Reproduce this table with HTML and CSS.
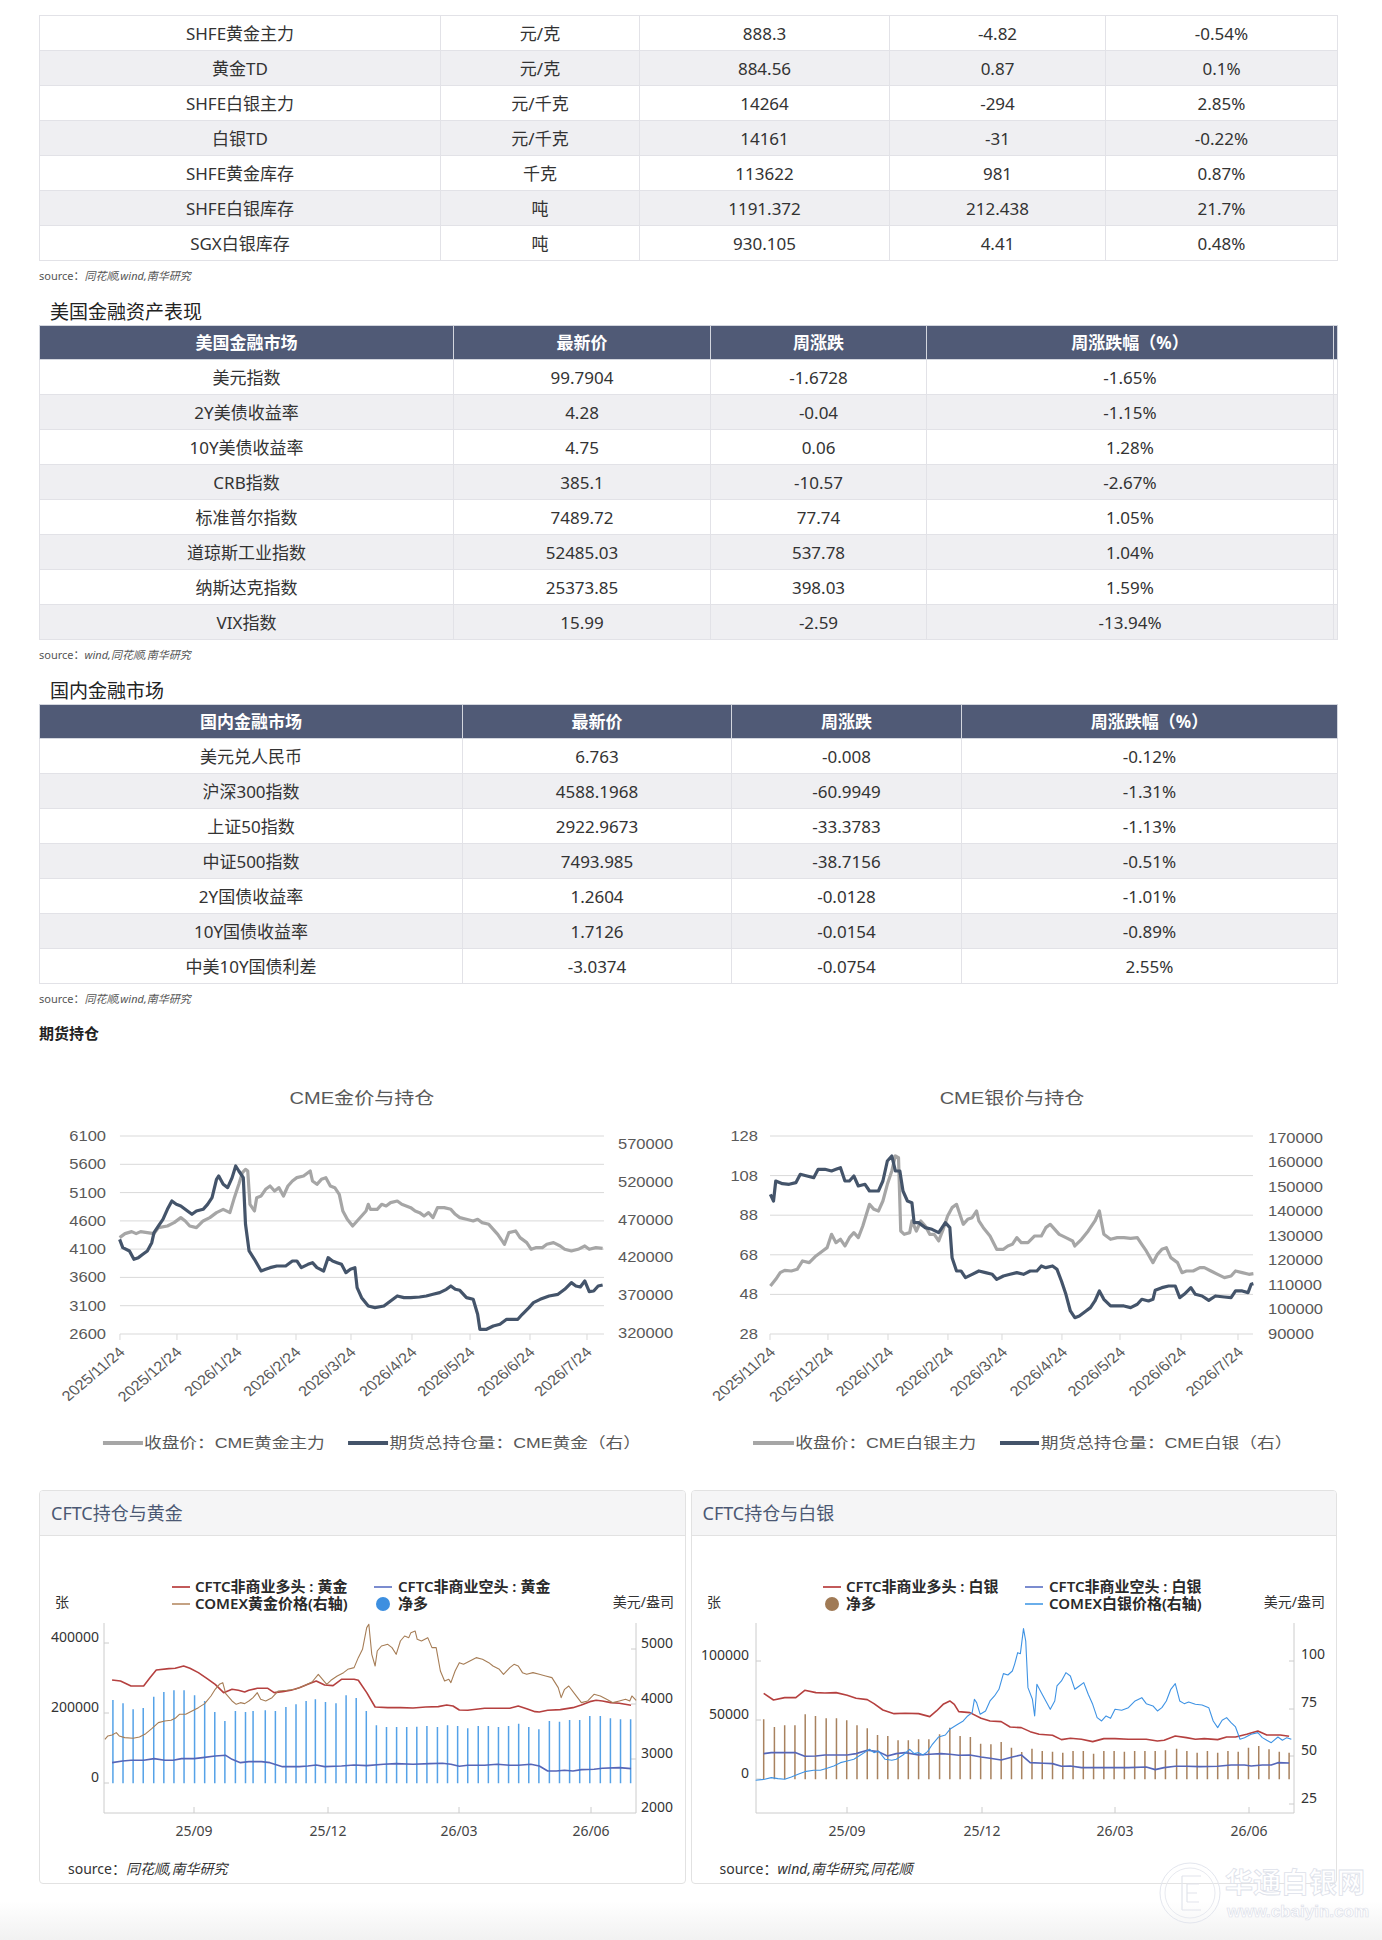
FILE: index.html
```html
<!DOCTYPE html>
<html lang="zh-CN">
<head>
<meta charset="utf-8">
<title>贵金属周报数据</title>
<link rel="stylesheet" href="styles.css">
</head>
<body>
<div class="page">

  <table class="tbl t1">
    <colgroup><col class="a"><col class="b"><col class="c"><col class="d"><col class="e"></colgroup>
    <tbody>
      <tr><td>SHFE黄金主力</td><td>元/克</td><td>888.3</td><td>-4.82</td><td>-0.54%</td></tr>
      <tr><td>黄金TD</td><td>元/克</td><td>884.56</td><td>0.87</td><td>0.1%</td></tr>
      <tr><td>SHFE白银主力</td><td>元/千克</td><td>14264</td><td>-294</td><td>2.85%</td></tr>
      <tr><td>白银TD</td><td>元/千克</td><td>14161</td><td>-31</td><td>-0.22%</td></tr>
      <tr><td>SHFE黄金库存</td><td>千克</td><td>113622</td><td>981</td><td>0.87%</td></tr>
      <tr><td>SHFE白银库存</td><td>吨</td><td>1191.372</td><td>212.438</td><td>21.7%</td></tr>
      <tr><td>SGX白银库存</td><td>吨</td><td>930.105</td><td>4.41</td><td>0.48%</td></tr>
    </tbody>
  </table>
  <p class="src">source：<i>同花顺,wind,南华研究</i></p>

  <h2 class="sec-title">美国金融资产表现</h2>
  <table class="tbl t2">
    <colgroup><col class="a"><col class="b"><col class="c"><col class="d"><col class="e"></colgroup>
    <thead>
      <tr><th>美国金融市场</th><th>最新价</th><th>周涨跌</th><th>周涨跌幅（%）</th><th class="edge"></th></tr>
    </thead>
    <tbody>
      <tr><td>美元指数</td><td>99.7904</td><td>-1.6728</td><td>-1.65%</td><td class="edge"></td></tr>
      <tr><td>2Y美债收益率</td><td>4.28</td><td>-0.04</td><td>-1.15%</td><td class="edge"></td></tr>
      <tr><td>10Y美债收益率</td><td>4.75</td><td>0.06</td><td>1.28%</td><td class="edge"></td></tr>
      <tr><td>CRB指数</td><td>385.1</td><td>-10.57</td><td>-2.67%</td><td class="edge"></td></tr>
      <tr><td>标准普尔指数</td><td>7489.72</td><td>77.74</td><td>1.05%</td><td class="edge"></td></tr>
      <tr><td>道琼斯工业指数</td><td>52485.03</td><td>537.78</td><td>1.04%</td><td class="edge"></td></tr>
      <tr><td>纳斯达克指数</td><td>25373.85</td><td>398.03</td><td>1.59%</td><td class="edge"></td></tr>
      <tr><td>VIX指数</td><td>15.99</td><td>-2.59</td><td>-13.94%</td><td class="edge"></td></tr>
    </tbody>
  </table>
  <p class="src">source：<i>wind,同花顺,南华研究</i></p>

  <h2 class="sec-title">国内金融市场</h2>
  <table class="tbl t3">
    <colgroup><col class="a"><col class="b"><col class="c"><col class="d"></colgroup>
    <thead>
      <tr><th>国内金融市场</th><th>最新价</th><th>周涨跌</th><th>周涨跌幅（%）</th></tr>
    </thead>
    <tbody>
      <tr><td>美元兑人民币</td><td>6.763</td><td>-0.008</td><td>-0.12%</td></tr>
      <tr><td>沪深300指数</td><td>4588.1968</td><td>-60.9949</td><td>-1.31%</td></tr>
      <tr><td>上证50指数</td><td>2922.9673</td><td>-33.3783</td><td>-1.13%</td></tr>
      <tr><td>中证500指数</td><td>7493.985</td><td>-38.7156</td><td>-0.51%</td></tr>
      <tr><td>2Y国债收益率</td><td>1.2604</td><td>-0.0128</td><td>-1.01%</td></tr>
      <tr><td>10Y国债收益率</td><td>1.7126</td><td>-0.0154</td><td>-0.89%</td></tr>
      <tr><td>中美10Y国债利差</td><td>-3.0374</td><td>-0.0754</td><td>2.55%</td></tr>
    </tbody>
  </table>
  <p class="src">source：<i>同花顺,wind,南华研究</i></p>

  <h3 class="sub-title">期货持仓</h3>

  <div class="cme-row">
    <!-- CME gold -->
    <svg class="cme" width="649" height="410" viewBox="0 0 550 410" preserveAspectRatio="none">
      <text class="cme-title" x="273.7" y="43" text-anchor="middle">CME金价与持仓</text>
      <g class="grid">
        <path d="M68.6 75H478.8M68.6 103.3H478.8M68.6 131.6H478.8M68.6 159.9H478.8M68.6 188.1H478.8M68.6 216.4H478.8M68.6 244.7H478.8M68.6 273H478.8"/>
        <path d="M68.6 273V279M116.9 273V279M167.8 273V279M217.8 273V279M264.4 273V279M316.1 273V279M365.3 273V279M416.1 273V279M464.4 273V279"/>
      </g>
      <g class="ax-l">
        <text x="56.8" y="80">6100</text><text x="56.8" y="108.3">5600</text><text x="56.8" y="136.6">5100</text><text x="56.8" y="164.9">4600</text>
        <text x="56.8" y="193.1">4100</text><text x="56.8" y="221.4">3600</text><text x="56.8" y="249.7">3100</text><text x="56.8" y="278">2600</text>
      </g>
      <g class="ax-r">
        <text x="490.7" y="88">570000</text><text x="490.7" y="125.8">520000</text><text x="490.7" y="163.6">470000</text>
        <text x="490.7" y="201.4">420000</text><text x="490.7" y="239.2">370000</text><text x="490.7" y="277">320000</text>
      </g>
      <g class="ax-x">
        <text transform="translate(73.7 292) rotate(-45)">2025/11/24</text>
        <text transform="translate(122 292) rotate(-45)">2025/12/24</text>
        <text transform="translate(172.9 292) rotate(-45)">2026/1/24</text>
        <text transform="translate(222.9 292) rotate(-45)">2026/2/24</text>
        <text transform="translate(269.5 292) rotate(-45)">2026/3/24</text>
        <text transform="translate(321.2 292) rotate(-45)">2026/4/24</text>
        <text transform="translate(370.4 292) rotate(-45)">2026/5/24</text>
        <text transform="translate(421.2 292) rotate(-45)">2026/6/24</text>
        <text transform="translate(469.5 292) rotate(-45)">2026/7/24</text>
      </g>
      <g transform="translate(-33.05,-20) scale(0.3783,0.3333)">
        <polyline class="ln-gray" points="268,590 280,578 295,572 305,578 315,572 330,575 345,578 355,560 375,555 390,545 405,530 415,540 425,555 440,560 455,540 470,530 485,515 500,505 515,515 525,470 535,430 543,395 550,385 555,390 560,490 570,510 575,470 585,465 595,445 605,435 615,450 625,440 635,465 645,435 655,420 665,410 680,405 695,390 700,420 710,430 720,415 730,410 740,435 750,440 760,460 768,510 778,535 790,555 800,540 810,525 820,510 825,490 830,505 845,505 855,490 865,495 875,485 890,480 900,490 910,495 920,500 930,510 940,515 950,525 960,515 970,530 980,500 995,500 1010,505 1020,520 1030,530 1045,535 1060,540 1070,535 1080,545 1095,550 1105,565 1115,580 1125,600 1130,610 1140,575 1155,570 1165,590 1180,605 1190,625 1200,620 1215,620 1225,610 1240,605 1255,615 1265,625 1280,630 1295,625 1310,615 1320,625 1335,620 1350,622"/>
        <polyline class="ln-navy" points="268,595 275,620 290,630 300,655 310,650 320,640 330,630 340,605 345,575 355,555 365,535 375,505 385,480 395,490 405,495 420,510 430,520 440,510 455,505 465,490 475,470 485,415 490,405 500,430 510,440 520,410 528,375 535,390 545,410 550,550 558,630 570,655 585,690 595,685 605,680 620,675 640,675 655,660 665,660 675,680 690,670 700,665 710,680 725,690 735,650 745,660 755,665 765,670 775,695 785,685 795,680 800,740 810,770 825,795 840,800 860,795 875,780 890,765 905,770 920,770 940,768 955,765 970,760 985,755 1000,745 1010,735 1020,745 1030,748 1045,770 1060,775 1070,820 1075,865 1090,865 1105,855 1120,850 1135,835 1160,835 1170,820 1185,800 1195,785 1210,775 1230,765 1250,760 1265,745 1280,725 1290,735 1300,738 1310,720 1320,752 1330,750 1340,735 1350,732"/>
      </g>
      <g class="lg">
        <path class="lg-gray" d="M54.2 382H88.1"/>
        <text x="89" y="387.5">收盘价：CME黄金主力</text>
        <path class="lg-navy" d="M261.9 382H295.8"/>
        <text x="297" y="387.5">期货总持仓量：CME黄金（右）</text>
      </g>
    </svg>

    <!-- CME silver -->
    <svg class="cme" width="649" height="410" viewBox="0 0 550 410" preserveAspectRatio="none">
      <text class="cme-title" x="274.6" y="43" text-anchor="middle">CME银价与持仓</text>
      <g class="grid">
        <path d="M69.5 75H478.8M69.5 114.6H478.8M69.5 154.2H478.8M69.5 193.8H478.8M69.5 233.4H478.8M69.5 273H478.8"/>
        <path d="M69.5 273V279M118.6 273V279M169.5 273V279M220.3 273V279M266.1 273V279M316.9 273V279M366.1 273V279M417.8 273V279M466.1 273V279"/>
      </g>
      <g class="ax-l">
        <text x="59.3" y="80">128</text><text x="59.3" y="119.6">108</text><text x="59.3" y="159.2">88</text>
        <text x="59.3" y="198.8">68</text><text x="59.3" y="238.4">48</text><text x="59.3" y="278">28</text>
      </g>
      <g class="ax-r">
        <text x="491.5" y="82">170000</text><text x="491.5" y="106.5">160000</text><text x="491.5" y="131">150000</text>
        <text x="491.5" y="155.5">140000</text><text x="491.5" y="180">130000</text><text x="491.5" y="204.5">120000</text>
        <text x="491.5" y="229">110000</text><text x="491.5" y="253.5">100000</text><text x="491.5" y="278">90000</text>
      </g>
      <g class="ax-x">
        <text transform="translate(75 292) rotate(-45)">2025/11/24</text>
        <text transform="translate(124.1 292) rotate(-45)">2025/12/24</text>
        <text transform="translate(175 292) rotate(-45)">2026/1/24</text>
        <text transform="translate(225.8 292) rotate(-45)">2026/2/24</text>
        <text transform="translate(271.6 292) rotate(-45)">2026/3/24</text>
        <text transform="translate(322.4 292) rotate(-45)">2026/4/24</text>
        <text transform="translate(371.6 292) rotate(-45)">2026/5/24</text>
        <text transform="translate(423.3 292) rotate(-45)">2026/6/24</text>
        <text transform="translate(471.6 292) rotate(-45)">2026/7/24</text>
      </g>
      <g transform="translate(-5.08,-20) scale(0.3783,0.3333)">
        <polyline class="ln-gray" points="198,735 210,715 220,695 230,688 245,690 258,685 270,660 285,665 300,645 315,630 325,620 335,580 345,605 355,595 365,615 375,590 385,575 395,590 405,555 420,490 430,505 440,510 450,480 460,430 470,390 478,345 485,350 490,570 498,580 510,575 515,540 525,570 535,540 545,555 555,580 565,580 575,600 585,565 595,525 605,500 615,490 620,510 630,550 640,535 650,530 660,510 665,540 675,560 690,585 705,625 720,625 730,615 740,610 750,590 760,605 775,605 790,585 805,585 815,560 825,550 835,565 845,580 860,590 875,600 880,615 895,595 910,570 925,540 935,510 945,580 960,595 975,590 990,590 1005,592 1020,590 1030,610 1040,630 1055,665 1065,640 1075,625 1085,620 1095,650 1110,665 1120,695 1130,690 1145,690 1160,680 1170,680 1185,690 1200,700 1215,710 1230,705 1240,690 1255,695 1270,700 1280,698"/>
        <polyline class="ln-navy" points="198,460 205,480 210,420 225,428 240,430 255,425 265,400 280,405 295,410 305,385 320,385 335,390 345,385 355,380 365,420 375,420 385,405 395,435 410,430 420,450 440,450 450,420 460,360 470,345 478,390 488,390 495,450 505,480 515,485 520,545 530,545 545,560 560,565 575,575 590,545 600,560 605,650 615,690 625,690 635,710 650,700 665,690 680,695 695,700 705,715 720,705 735,700 750,695 765,700 780,690 795,690 805,675 815,680 830,675 840,685 850,720 860,760 870,810 880,830 890,825 905,810 915,800 925,780 935,750 945,775 960,795 975,795 990,795 1005,800 1020,790 1030,775 1045,780 1055,775 1060,748 1075,740 1090,735 1105,735 1115,770 1125,760 1140,740 1150,760 1165,765 1180,778 1195,765 1215,768 1230,770 1240,750 1255,750 1268,755 1275,730 1280,728"/>
      </g>
      <g class="lg">
        <path class="lg-gray" d="M55.1 382H89.8"/>
        <text x="91" y="387.5">收盘价：CME白银主力</text>
        <path class="lg-navy" d="M264.4 382H297.5"/>
        <text x="299" y="387.5">期货总持仓量：CME白银（右）</text>
      </g>
    </svg>
  </div>

  <div class="cftc-row">
    <section class="panel">
      <header class="panel-head">CFTC持仓与黄金</header>
      <div class="panel-body">
        <svg class="cftc" width="645" height="312" viewBox="0 0 645 312">
          <text class="unit" x="15" y="71">张</text>
          <text class="unit" x="634" y="71" text-anchor="end">美元/盎司</text>
          <g class="leg">
            <path d="M132 51H150" stroke="#c25a5a" stroke-width="2"/>
            <text x="155" y="56">CFTC非商业多头 : 黄金</text>
            <path d="M334 51H352" stroke="#7b8ccf" stroke-width="2"/>
            <text x="358" y="56">CFTC非商业空头 : 黄金</text>
            <path d="M132 68H150" stroke="#c4a283" stroke-width="2"/>
            <text x="155" y="73">COMEX黄金价格(右轴)</text>
            <circle cx="343" cy="68" r="7" fill="#3d8fe0"/>
            <text x="358" y="73">净多</text>
          </g>
          <g class="axis">
            <path d="M64 87V277H596V87"/>
            <path d="M64 107H69M64 177H69M64 247H69M591 113H596M591 168H596M591 223H596M154 277V271M288 277V271M419 277V271M551 277V271"/>
          </g>
          <g class="lbl-l">
            <text x="59" y="106">400000</text><text x="59" y="176">200000</text><text x="59" y="246">0</text>
          </g>
          <g class="lbl-r">
            <text x="601" y="112">5000</text><text x="601" y="167">4000</text><text x="601" y="222">3000</text><text x="601" y="276">2000</text>
          </g>
          <g class="lbl-x">
            <text x="154" y="300">25/09</text><text x="288" y="300">25/12</text><text x="419" y="300">26/03</text><text x="551" y="300">26/06</text>
          </g>
          <g transform="translate(-10,-55) scale(0.4209,0.3333)">
            <path class="bars-blue" d="M197 657V907M221 667V907M245 685V907M269 681V907M294 647V907M318 633V907M342 628V907M366 628V907M391 643V907M415 660V907M439 693V907M463 720V907M488 690V907M512 693V907M530 690V907M559 688V907M583 690V907M608 678V907M632 670V907M656 660V907M678 655V907M702 663V907M727 667V907M751 643V907M775 651V907M799 690V907M823 733V907M847 738V907M871 738V907M895 738V907M919 737V907M943 735V907M968 738V907M992 733V907M1016 735V907M1040 742V907M1065 735V907M1089 735V907M1113 738V907M1137 735V907M1161 728V907M1185 738V907M1209 745V907M1234 720V907M1258 722V907M1282 717V907M1306 717V907M1330 705V907M1355 705V907M1379 712V907M1403 715V907M1427 715V907"/>
            <polyline class="ln-red" points="195,597 215,600 240,615 270,615 285,590 300,567 330,563 345,562 365,555 380,562 400,575 420,592 440,610 460,635 480,625 495,628 510,633 520,628 540,622 565,622 580,635 600,632 620,628 640,620 660,610 680,600 700,612 720,614 740,595 770,595 780,598 800,635 820,678 850,680 880,680 910,681 940,678 970,677 990,672 1005,675 1020,687 1040,688 1060,685 1080,682 1100,682 1140,682 1160,675 1180,683 1200,692 1210,693 1230,688 1260,686 1290,680 1310,672 1330,662 1345,658 1360,660 1380,665 1400,667 1428,673"/>
            <polyline class="ln-short" points="195,845 220,840 240,838 270,838 295,833 320,838 340,838 360,833 390,833 410,830 440,825 465,823 480,835 500,845 520,842 550,842 570,845 600,857 640,857 660,855 680,852 700,857 740,855 770,852 800,854 840,850 870,848 910,850 950,848 980,847 1000,850 1020,856 1040,853 1080,853 1110,850 1140,853 1160,853 1190,850 1210,855 1230,870 1250,870 1270,868 1290,870 1310,866 1340,865 1360,862 1400,860 1428,863"/>
            <polyline class="ln-goldp" points="178,775 185,765 195,762 205,755 212,765 225,770 245,772 260,768 275,758 290,742 305,725 320,720 335,718 345,712 355,700 370,700 385,690 400,680 415,668 430,645 440,625 450,610 458,605 465,638 480,660 490,670 500,665 510,668 520,660 530,650 540,635 548,655 560,660 575,650 590,630 610,628 630,625 650,615 670,603 685,580 695,595 705,610 715,598 730,585 745,575 755,565 770,560 780,530 790,505 800,440 805,430 812,520 820,555 825,510 835,495 850,490 860,500 870,520 880,480 890,465 900,470 905,455 915,450 920,475 930,480 945,470 955,500 965,500 975,570 985,600 995,595 1000,605 1010,570 1020,545 1030,550 1045,540 1060,530 1075,535 1090,545 1100,555 1115,565 1125,580 1140,560 1150,550 1160,555 1170,575 1180,580 1195,575 1210,580 1225,585 1240,590 1255,620 1262,650 1270,625 1280,615 1295,640 1310,665 1325,660 1340,640 1355,645 1370,655 1385,665 1400,660 1415,655 1425,660 1430,645 1440,658"/>
          </g>
        </svg>
        <p class="panel-src">source：<i>同花顺,南华研究</i></p>
      </div>
    </section>

    <section class="panel">
      <header class="panel-head">CFTC持仓与白银</header>
      <div class="panel-body">
        <svg class="cftc" width="644" height="312" viewBox="0 0 644 312">
          <text class="unit" x="15" y="71">张</text>
          <text class="unit" x="633" y="71" text-anchor="end">美元/盎司</text>
          <g class="leg">
            <path d="M131 51H149" stroke="#c25a5a" stroke-width="2"/>
            <text x="154" y="56">CFTC非商业多头 : 白银</text>
            <path d="M333 51H351" stroke="#7b8ccf" stroke-width="2"/>
            <text x="357" y="56">CFTC非商业空头 : 白银</text>
            <circle cx="140" cy="68" r="7" fill="#a07a55"/>
            <text x="154" y="73">净多</text>
            <path d="M333 68H351" stroke="#6aaeea" stroke-width="2"/>
            <text x="357" y="73">COMEX白银价格(右轴)</text>
          </g>
          <g class="axis">
            <path d="M64 87V277H602V87"/>
            <path d="M64 125H69M64 184H69M64 243H69M597 125H602M597 173H602M597 220H602M597 268H602M155 277V271M290 277V271M423 277V271M557 277V271"/>
          </g>
          <g class="lbl-l">
            <text x="57" y="124">100000</text><text x="57" y="183">50000</text><text x="57" y="242">0</text>
          </g>
          <g class="lbl-r">
            <text x="609" y="123">100</text><text x="609" y="171">75</text><text x="609" y="219">50</text><text x="609" y="267">25</text>
          </g>
          <g class="lbl-x">
            <text x="155" y="300">25/09</text><text x="290" y="300">25/12</text><text x="423" y="300">26/03</text><text x="557" y="300">26/06</text>
          </g>
          <g transform="translate(-10,-55) scale(0.4464,0.3333)">
            <path class="bars-brown" d="M183 715V895M207 738V895M230 733V895M253 733V895M276 700V895M299 705V895M323 712V895M346 712V895M369 718V895M392 733V895M415 742V895M438 762V895M461 765V895M484 778V895M507 778V895M530 775V895M553 775V895M577 760V895M600 740V895M623 765V895M646 768V895M669 788V895M692 790V895M715 783V895M738 800V895M761 813V895M784 803V895M807 810V895M830 812V895M853 815V895M876 810V895M899 810V895M922 818V895M945 810V895M968 810V895M991 812V895M1014 810V895M1037 810V895M1060 810V895M1083 808V895M1108 803V895M1131 810V895M1154 815V895M1177 810V895M1200 815V895M1223 810V895M1246 812V895M1269 800V895M1292 795V895M1315 805V895M1338 812V895M1360 815V895"/>
            <polyline class="ln-red" points="183,637 205,657 230,650 255,650 275,628 300,635 320,636 345,635 370,643 390,652 415,656 430,668 450,687 475,698 500,697 530,698 555,707 570,690 585,670 600,660 610,670 620,692 645,695 670,712 690,720 715,722 735,738 760,740 780,752 800,760 830,763 850,776 870,772 895,775 920,782 945,773 970,773 1000,775 1040,775 1065,780 1080,778 1105,765 1130,770 1150,775 1170,773 1200,776 1220,768 1240,768 1265,760 1290,750 1310,762 1340,762 1360,766"/>
            <polyline class="ln-short" points="183,818 200,815 230,815 255,815 275,826 300,825 320,822 345,822 370,822 390,818 415,808 440,812 460,825 480,818 500,815 530,822 555,820 580,818 600,820 620,823 645,822 670,828 690,832 715,837 740,828 760,822 780,845 810,847 830,848 850,856 870,855 895,860 920,860 945,860 970,860 1000,860 1040,858 1060,866 1080,860 1105,856 1130,856 1160,857 1200,856 1230,852 1260,852 1275,855 1300,852 1320,852 1335,845 1360,846"/>
            <polyline class="ln-silverp" points="165,898 185,895 200,890 215,893 230,895 245,888 260,880 275,872 295,868 310,868 325,862 340,855 355,845 370,840 385,835 400,822 412,812 420,805 430,815 440,810 455,835 470,838 480,835 495,822 510,805 520,818 530,815 540,822 550,812 560,792 575,768 590,762 600,745 615,732 630,720 640,705 650,695 655,655 660,665 668,700 680,690 690,660 700,645 710,625 720,578 730,582 740,570 745,550 752,515 758,518 765,443 770,480 775,620 785,655 790,705 795,610 805,635 815,660 825,685 835,660 840,615 850,600 860,575 870,585 880,625 890,615 900,605 910,640 920,670 930,710 940,720 950,705 960,712 970,685 985,688 1000,680 1015,660 1030,650 1040,668 1055,675 1065,690 1075,680 1085,660 1095,625 1105,608 1115,660 1125,668 1135,663 1150,670 1165,672 1180,680 1190,720 1200,740 1210,718 1220,710 1230,725 1240,738 1250,775 1260,770 1275,760 1290,755 1300,770 1310,778 1320,785 1335,768 1345,778 1355,770 1365,775"/>
          </g>
        </svg>
        <p class="panel-src">source：<i>wind,南华研究,同花顺</i></p>
      </div>
    </section>
  </div>
</div>
<div class="foot"></div>

<div class="watermark" aria-hidden="true">
  <svg width="220" height="80" viewBox="0 0 220 80">
    <circle cx="35" cy="35" r="30" fill="none" stroke="#e3e6ee" stroke-width="1"/>
    <circle cx="35" cy="35" r="25" fill="none" stroke="#e8eaf0" stroke-width="1"/>
    <path d="M27 18V52M27 18H46M27 52H46M32 26H44M32 44H44M32 26V44M32 35H42" fill="none" stroke="#e1e4ec" stroke-width="1.2"/>
    <text class="wm-big" x="70" y="35">华通白银网</text>
    <text class="wm-small" x="72" y="59">www.cbaiyin.com</text>
  </svg>
</div>
</body>
</html>
```

FILE: styles.css
```css
html, body {
  margin: 0;
  padding: 0;
  background: #ffffff;
}

body {
  font-family: "Noto Sans", "Noto Sans CJK SC", sans-serif;
  color: #333333;
  position: relative;
  min-height: 1940px;
}

.page {
  width: 1298px;
  padding: 15px 0 0 39px;
}

/* ---------- tables ---------- */
.tbl {
  width: 1298px;
  border-collapse: collapse;
  table-layout: fixed;
}

.tbl td,
.tbl th {
  border: 1px solid #e2e2e7;
  padding: 1px 0 0;
  text-align: center;
  font-size: 17px;
  line-height: 20px;
  white-space: nowrap;
}

.tbl tbody tr {
  height: 35px;
}

.tbl thead tr {
  height: 34px;
}

.tbl td {
  color: #333333;
  background: #ffffff;
}

.tbl tbody tr:nth-child(even) td {
  background: #efeff2;
}

.tbl th {
  background: #505a76;
  color: #ffffff;
  font-weight: 700;
  border-color: #d3d6de;
}

.t1 .a { width: 401px; }
.t1 .b { width: 199px; }
.t1 .c { width: 250px; }
.t1 .d { width: 216px; }
.t1 .e { width: 232px; }

.t2 .a { width: 414px; }
.t2 .b { width: 257px; }
.t2 .c { width: 216px; }
.t2 .d { width: 407px; }
.t2 .e { width: 4px; }

.t3 .a { width: 423px; }
.t3 .b { width: 269px; }
.t3 .c { width: 230px; }
.t3 .d { width: 376px; }

.src {
  margin: 7px 0 0;
  font-size: 11px;
  line-height: 16px;
  color: #555555;
}

.src i {
  font-style: italic;
  color: #555555;
}

.sec-title {
  margin: 15px 0 0;
  padding-left: 11px;
  font-size: 19px;
  line-height: 26px;
  font-weight: 400;
  color: #222222;
}

.sub-title {
  margin: 16px 0 0;
  font-size: 15px;
  line-height: 20px;
  font-weight: 700;
  color: #222222;
}

/* ---------- CME charts ---------- */
.cme-row {
  display: flex;
  margin-top: 18px;
}

.cme {
  display: block;
  flex: 0 0 649px;
}

.cme text {
  font-family: "Liberation Sans", "Noto Sans CJK SC", sans-serif;
  fill: #595959;
}

.cme .cme-title {
  font-size: 17px;
}

.cme .grid path {
  stroke: #d9d9d9;
  stroke-width: 1;
  fill: none;
  vector-effect: non-scaling-stroke;
}

.cme .ax-l text {
  font-size: 14px;
  text-anchor: end;
}

.cme .ax-r text {
  font-size: 14px;
}

.cme .ax-x text {
  font-size: 14px;
  text-anchor: end;
}

.cme .lg text {
  font-size: 15px;
}

.ln-gray,
.ln-navy {
  fill: none;
  stroke-width: 3.2;
  stroke-linejoin: round;
  vector-effect: non-scaling-stroke;
}

.ln-gray { stroke: #a6a6a6; }
.ln-navy { stroke: #44546a; }

.lg-gray,
.lg-navy {
  stroke-width: 4;
  fill: none;
  vector-effect: non-scaling-stroke;
}

.lg-gray { stroke: #a6a6a6; }
.lg-navy { stroke: #44546a; }

/* ---------- CFTC panels ---------- */
.cftc-row {
  display: flex;
  gap: 5px;
  margin-top: 19px;
}

.panel {
  flex: 1 1 0;
  border: 1px solid #e2e2e2;
  border-radius: 4px;
  background: #ffffff;
  overflow: hidden;
}

.panel-head {
  height: 44px;
  line-height: 44px;
  padding-left: 11px;
  background: #f5f5f6;
  border-bottom: 1px solid #e2e2e2;
  font-size: 18px;
  color: #4b5873;
}

.panel-body {
  padding-bottom: 4px;
}

.cftc {
  display: block;
}

.cftc text {
  font-family: "Noto Sans", "Noto Sans CJK SC", sans-serif;
  fill: #333333;
  font-size: 14px;
}

.cftc .unit {
  font-size: 14px;
}

.cftc .leg text {
  font-size: 15px;
  font-weight: 600;
  fill: #2a2a2a;
}

.cftc .axis path {
  stroke: #cccccc;
  stroke-width: 1;
  fill: none;
}

.cftc .lbl-l text {
  text-anchor: end;
}

.cftc .lbl-x text {
  text-anchor: middle;
  fill: #444444;
}

.bars-blue,
.bars-brown {
  fill: none;
  stroke-width: 1.5;
  vector-effect: non-scaling-stroke;
}

.bars-blue { stroke: #55a2e8; }
.bars-brown { stroke: #a8825f; }

.ln-red,
.ln-short,
.ln-goldp,
.ln-silverp {
  fill: none;
  stroke-linejoin: round;
  vector-effect: non-scaling-stroke;
}

.ln-red { stroke: #b5403f; stroke-width: 1.6; }
.ln-short { stroke: #5566b8; stroke-width: 1.6; }
.ln-goldp { stroke: #a67d56; stroke-width: 1.1; }
.ln-silverp { stroke: #3f93e4; stroke-width: 1.1; }

.panel-src {
  margin: 11px 0 0;
  padding-left: 28px;
  font-size: 14px;
  line-height: 20px;
  color: #333333;
}

.panel-src i {
  font-style: italic;
}

/* ---------- footer & watermark ---------- */
.foot {
  height: 57px;
  background: linear-gradient(to bottom, rgba(255,255,255,0) 30%, #f1f1f1 100%);
}

.watermark {
  position: absolute;
  left: 1155px;
  top: 1858px;
  width: 220px;
  height: 80px;
  pointer-events: none;
}

.wm-big {
  font-family: "Noto Sans CJK SC", sans-serif;
  font-size: 28px;
  font-weight: 700;
  fill: #ffffff;
  stroke: #dde1ea;
  stroke-width: 0.8;
}

.wm-small {
  font-family: "Liberation Sans", sans-serif;
  font-size: 17px;
  font-weight: 700;
  fill: #ffffff;
  stroke: #dde1ea;
  stroke-width: 0.7;
}
```
